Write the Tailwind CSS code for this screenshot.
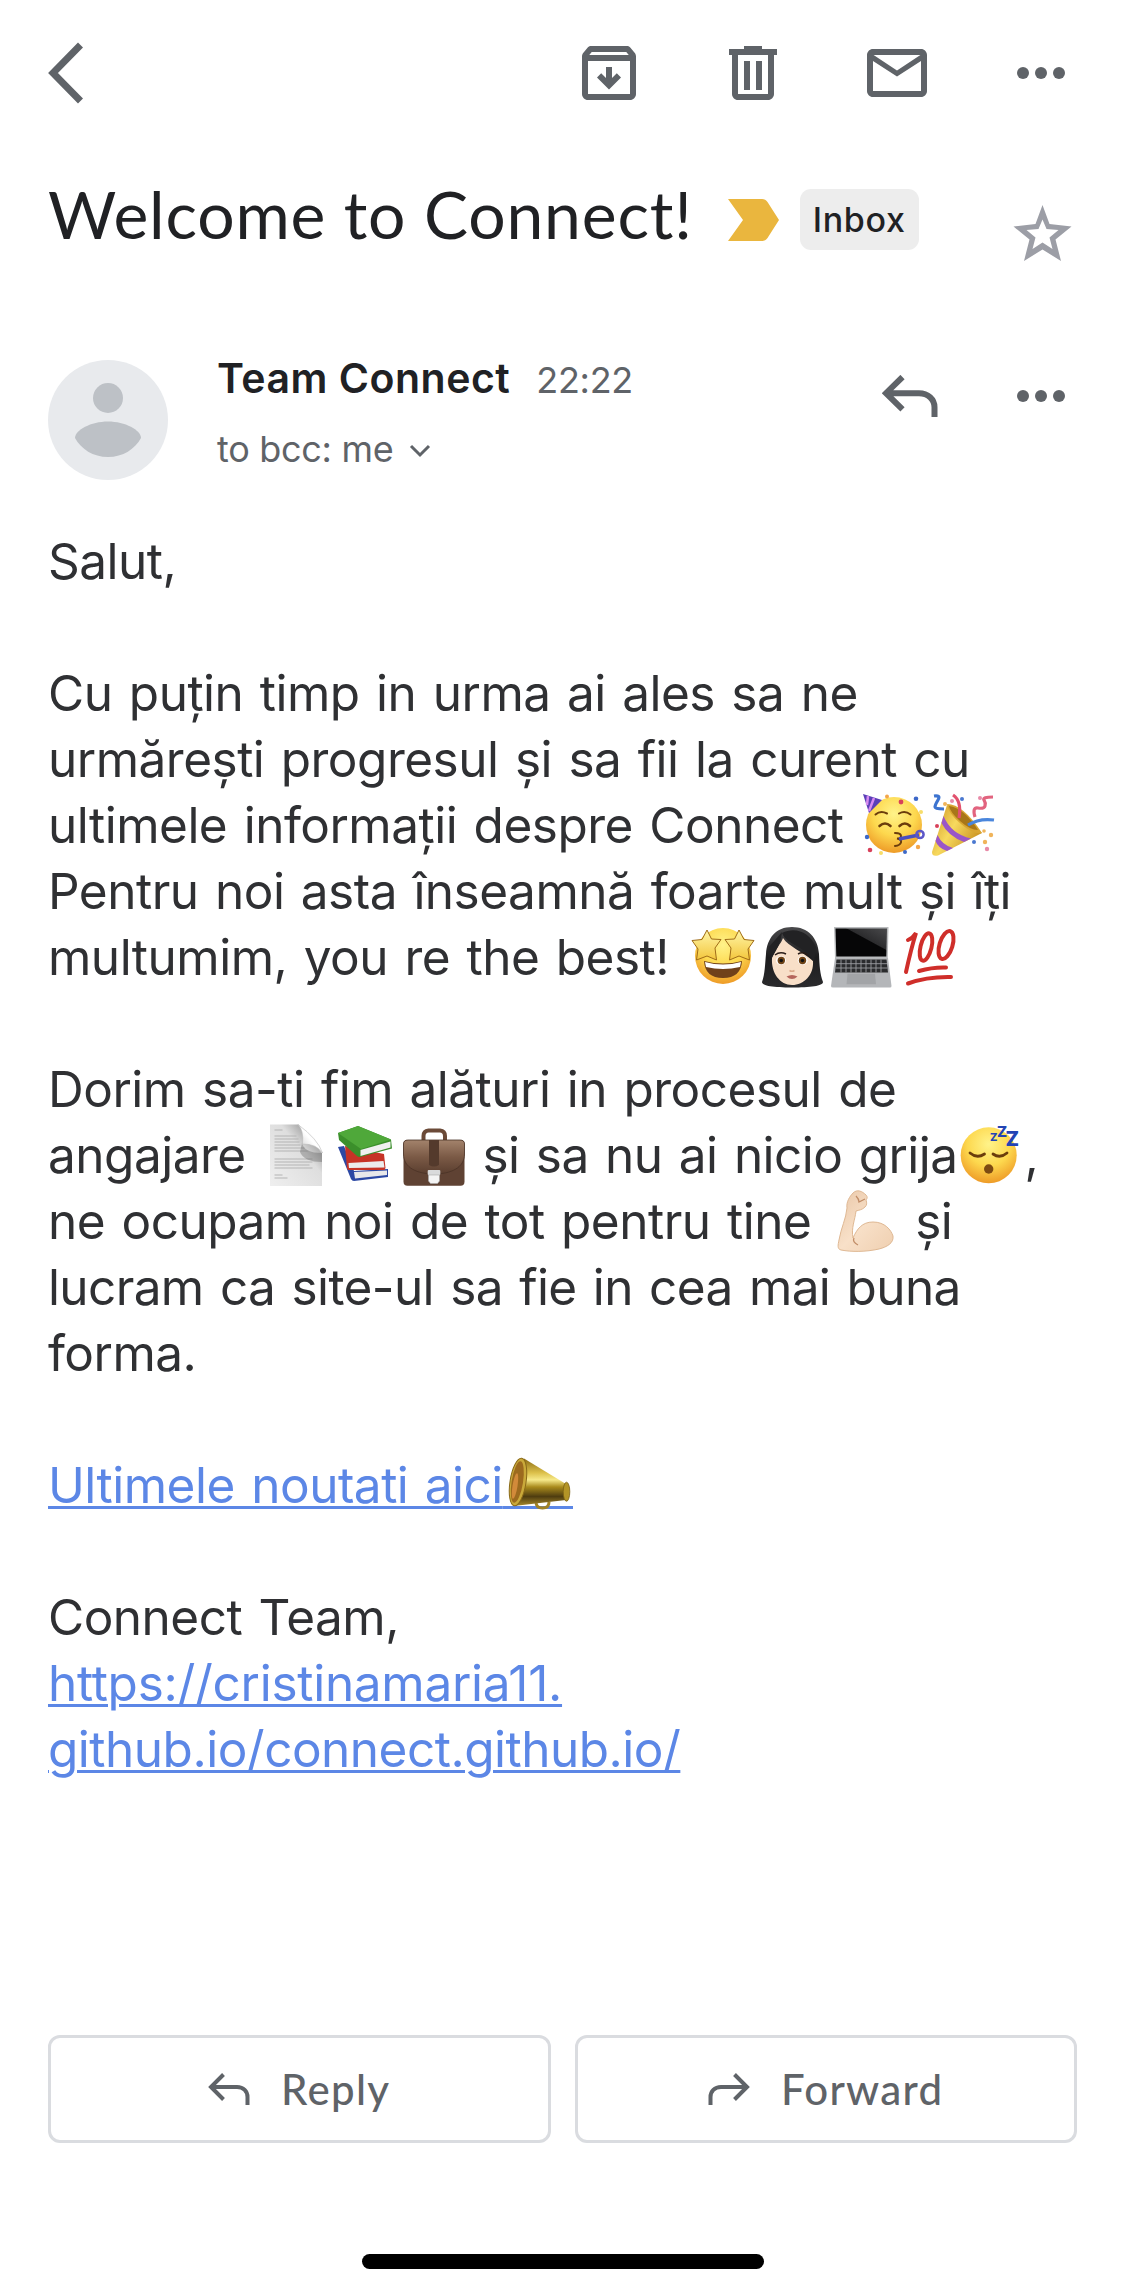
<!DOCTYPE html>
<html lang="ro">
<head>
<meta charset="utf-8">
<title>Welcome to Connect!</title>
<script src="https://cdn.jsdelivr.net/npm/@tailwindcss/browser@4"></script>
</head>
<body class="bg-white font-['Inter',sans-serif] text-[#202124]">
<svg class="absolute size-0" aria-hidden="true">
  <defs>
    <radialGradient id="face" cx="50%" cy="30%" r="70%"><stop offset="0" stop-color="#fff38a"/><stop offset=".55" stop-color="#fdd84e"/><stop offset="1" stop-color="#ee9b27"/></radialGradient>
    <linearGradient id="gold" x1="0" y1="0" x2="0" y2="1"><stop offset="0" stop-color="#8a6a14"/><stop offset=".3" stop-color="#dcc04a"/><stop offset=".45" stop-color="#f6e98a"/><stop offset=".6" stop-color="#a98a1c"/><stop offset=".8" stop-color="#4f3d10"/><stop offset="1" stop-color="#a88a2c"/></linearGradient>
    <linearGradient id="cone" x1="0" y1="0" x2="1" y2=".6"><stop offset="0" stop-color="#c98f1e"/><stop offset=".5" stop-color="#f7d95e"/><stop offset="1" stop-color="#c8901f"/></linearGradient>
    <linearGradient id="star" x1="0" y1="0" x2="0" y2="1"><stop offset="0" stop-color="#fff6a8"/><stop offset="1" stop-color="#f3c63c"/></linearGradient>
    <linearGradient id="hair" x1="0" y1="0" x2="0" y2="1"><stop offset="0" stop-color="#4a4a4c"/><stop offset=".5" stop-color="#1c1c1e"/><stop offset="1" stop-color="#2b2b2d"/></linearGradient>
    <linearGradient id="screen" x1="0" y1="1" x2="1" y2="0"><stop offset=".6" stop-color="#060607"/><stop offset=".62" stop-color="#2c2c2e"/><stop offset="1" stop-color="#4a4a4c"/></linearGradient>
    <linearGradient id="paper" x1="0" y1="1" x2="1" y2="0"><stop offset="0" stop-color="#efefef"/><stop offset=".6" stop-color="#dedede"/><stop offset="1" stop-color="#6d6d6d"/></linearGradient>
    <linearGradient id="curl" x1="0" y1="1" x2="1" y2="0"><stop offset="0" stop-color="#c4c4c4"/><stop offset=".5" stop-color="#ffffff"/><stop offset="1" stop-color="#e2e2e2"/></linearGradient>
    <linearGradient id="leather" x1="0" y1="0" x2="0" y2="1"><stop offset="0" stop-color="#a3836c"/><stop offset=".5" stop-color="#7b5a46"/><stop offset="1" stop-color="#5a3e2f"/></linearGradient>
    <linearGradient id="skin" x1="0" y1="0" x2="1" y2="1"><stop offset="0" stop-color="#e9c7a8"/><stop offset=".5" stop-color="#f8e0c8"/><stop offset="1" stop-color="#efcfb0"/></linearGradient>
  </defs>
</svg>

<header class="flex h-[146px] items-center justify-between pl-[48px] pr-[48px]">
  <svg class="h-[62px] w-[38px]" viewBox="0 0 38 62" fill="none" stroke="#5f6368" stroke-width="7"><path d="M32.500 3 5 31l27.500 28"/></svg>
  <div class="flex gap-[72px] fill-[#5f6368]">
    <svg class="size-[72px]" viewBox="0 0 24 24"><path d="m20.540 5.230-1.390-1.680C18.880 3.210 18.470 3 18 3H6c-.47 0-.88.21-1.160.55L3.460 5.230C3.170 5.570 3 6.020 3 6.500V19c0 1.100.9 2 2 2h14c1.100 0 2-.9 2-2V6.500c0-.48-.17-.93-.46-1.270zM6.240 5h11.520l.83 1H5.420l.82-1zM5 19V8h14v11H5zm11-5.500L12 17.500l-4-4 1.400-1.400 1.600 1.600V10h2v3.700l1.600-1.600 1.400 1.400z"/></svg>
    <svg class="size-[72px]" viewBox="0 0 24 24"><path d="M15 4V3H9v1H4v2h1v13c0 1.100.9 2 2 2h10c1.100 0 2-.9 2-2V6h1V4h-5zm2 15H7V6h10v13zM9 8h2v9.700H9V8zm4 0h2v9.700h-2V8z"/></svg>
    <svg class="size-[72px]" viewBox="0 0 24 24"><path d="M20 4H4c-1.100 0-2 .9-2 2v12c0 1.100.9 2 2 2h16c1.100 0 2-.9 2-2V6c0-1.100-.9-2-2-2zm-.2 2L12 11.200 4.200 6h15.600zM4 18V8l8 5.200L20 8v10H4z"/></svg>
    <svg class="size-[72px]" viewBox="0 0 24 24"><circle cx="6" cy="12" r="2"/><circle cx="12" cy="12" r="2"/><circle cx="18" cy="12" r="2"/></svg>
  </div>
</header>

<main class="px-[48px]">
  <div class="flex items-start pt-[28px]">
    <h1 class="whitespace-nowrap font-['Lato',sans-serif] text-[66px] leading-[80px] tracking-[0.8px]">Welcome to Connect!</h1>
    <svg class="ml-[35px] mt-[25px] h-[42px] w-[51px]" viewBox="0 0 51 42"><path d="M0 0h34q3.500 0 5.500 3L51 21 39.500 39q-2 3-5.500 3H0l15-21z" fill="#eab63e"/></svg>
    <span class="ml-[21px] mt-[15px] h-[61px] w-[119px] rounded-[11px] bg-[#ededed] text-center text-[34px] font-medium leading-[61px] tracking-[0.7px]">Inbox</span>
    <svg class="ml-auto mr-[5px] mt-[31px] h-[57px] w-[59px]" viewBox="0 0 59 57"><path d="M29.500 0 36.500 19 58.500 21.500 42.500 34.500 48 56 29.500 44.500 11 56 16.500 34.500.5 21.500 22.500 19zM29.500 14.500 33.500 24 45.500 25 36.500 32.500 39.500 44 29.500 37.500 19.500 44 22.500 32.500 13.500 25 25.500 24z" fill="#9c9ea6" fill-rule="evenodd"/></svg>
  </div>

  <div class="mt-[90px] flex h-[128px] items-start">
    <svg class="mt-[8px] size-[120px] shrink-0" viewBox="0 0 120 120"><circle cx="60" cy="60" r="60" fill="#e8eaed"/><circle cx="60" cy="38" r="15" fill="#bdc1c6"/><path d="M27 78c0-8 16-16.500 33-16.500S93 70 93 78c-6 11-18 19-33 19S33 89 27 78z" fill="#bdc1c6"/></svg>
    <div class="ml-[49px] mt-[1px]">
      <div class="flex items-baseline whitespace-nowrap leading-[50px]"><span class="text-[41px] font-semibold tracking-[0.500px]">Team Connect</span><span class="ml-[26px] text-[36px] tracking-[-0.300px] text-[#5f6368]">22:22</span></div>
      <div class="mt-[22px] flex items-center whitespace-nowrap text-[36px] leading-[44px] tracking-[-0.300px] text-[#5f6368]">to bcc: me<svg class="ml-[16px] mt-[3px] h-[14px] w-[22px]" viewBox="0 0 22 14" fill="none" stroke="#5f6368" stroke-width="3"><path d="m2 2 9 9 9-9"/></svg></div>
    </div>
    <svg class="ml-auto mt-[23px] h-[42px] w-[56px]" viewBox="0 0 56 42" fill="none" stroke="#5f6368" stroke-width="6"><path d="M20.500 2 4 18.200l16.500 16.200M4 18.200h33c9 0 15.500 6 15.500 14V42"/></svg>
    <svg class="ml-[67px] mt-[8px] h-[72px] w-[72px] fill-[#5f6368]" viewBox="0 0 24 24"><circle cx="6" cy="12" r="2"/><circle cx="12" cy="12" r="2"/><circle cx="18" cy="12" r="2"/></svg>
  </div>

  <article class="mt-[48px] space-y-[66px] text-[49.500px] leading-[66px] tracking-[-0.500px] text-[#2f3033] [word-spacing:3px] *:whitespace-pre">
    <div class="h-[66px]">Salut,</div>
    <div class="flex flex-col">
      <div class="h-[66px]">Cu puțin timp in urma ai ales sa ne</div>
      <div class="h-[66px]">urmărești progresul și sa fii la curent cu</div>
      <div class="flex h-[66px]"><span>ultimele informații despre Connect </span><svg role="img" aria-label="🥳" class="h-[66px] w-[69px]" viewBox="0 0 69 66"><circle cx="34" cy="33" r="28" fill="url(#face)"/><path d="M3 2 22 8 9 21z" fill="#5b3fb8"/><path d="m8 4-1 9m7-7-5 13" stroke="#d78af0" stroke-width="2.500"/><g fill="none" stroke="#6b3d0c" stroke-width="2" stroke-linecap="round"><path d="M15.500 22.500q5-4.500 11.500-1M39 21.500q6-3.500 11.500 1"/><path d="M19.500 34q5.500-5 11 0M39.500 34q5.500-5 10.500 0" stroke-width="2.600"/><path d="M35 41q6 0 6 3t-4 2.500q5 1 4 4t-6 3.500"/></g><path d="m39 47 20-4" stroke="#4a4fc0" stroke-width="3.500"/><circle cx="60" cy="42.500" r="3.600" fill="none" stroke="#5c56c8" stroke-width="2.500"/><g fill="#3d68c8"><circle cx="56" cy="6.700" r="2.300"/><circle cx="7" cy="45" r="2.200"/><circle cx="45" cy="60" r="2"/></g><g fill="#d8415a"><circle cx="41" cy="10" r="2.400"/><circle cx="10" cy="58" r="2.300"/></g><g fill="#f3a64a"><circle cx="27" cy="4.500" r="2"/><circle cx="58" cy="55" r="2.200"/></g><g fill="#f7dd6a"><circle cx="61" cy="20" r="2"/><circle cx="21" cy="61" r="2"/></g></svg><svg role="img" aria-label="🎉" class="h-[66px] w-[69px]" viewBox="0 0 69 66"><path d="M3 60 18 13 53 41 9 63.500Q3 65 3 60z" fill="url(#cone)"/><path d="M14.500 24Q22 42 42 46.500L35 50Q19 44 12.500 31zM8.500 43Q13 53 24 56l-6 3Q9 56 6.500 49z" fill="#9a55c8"/><path d="M18 12Q34 12 53 41q-8 2-21-9T18 12z" fill="#d9a632"/><path d="M20 14Q35 16 49 38q-8 0-18-9T20 14z" fill="#a87618"/><g fill="none" stroke-width="3.200"><path d="M5 4q7-1 4 4t-3 7 9 2" stroke="#3d74d0"/><path d="M24 3q9 6 6 23" stroke="#e2526e"/><path d="M39 33q11-7 26-5" stroke="#4a86dc"/><path d="M46 25q-3-10 3-9t7-2-1-6 9-3" stroke="#e2647f"/></g><g fill="#4a78d0"><circle cx="33" cy="7" r="2"/><circle cx="45" cy="50" r="2"/></g><g fill="#e88aa8"><circle cx="51" cy="6" r="2"/><circle cx="58" cy="57" r="2.200"/><circle cx="23" cy="9" r="2"/></g><g fill="#f0b45a"><circle cx="62" cy="43" r="2.200"/><circle cx="56" cy="50" r="2.200"/><circle cx="16" cy="12" r="2"/><circle cx="55" cy="39" r="1.800"/></g><circle cx="8" cy="34" r="2" fill="#d8415a"/></svg></div>
      <div class="h-[66px]">Pentru noi asta înseamnă foarte mult și îți</div>
      <div class="flex h-[66px]"><span>multumim, you re the best! </span><svg role="img" aria-label="🤩" class="ml-[4px] h-[66px] w-[69px]" viewBox="0 0 69 66"><circle cx="34" cy="32" r="28" fill="url(#face)"/><path d="M15 37q19 5 38 0-1 17-19 17T15 37z" fill="#70411a"/><path d="M16 38q18 5 36 0l-1 5q-17 4-34 0z" fill="#fff"/><path d="m18 6 4.500 9 9.500.5-6 8.500 1.500 12-9.500-4-10.500 4L9 25l-6-8.500 10-1z" fill="url(#star)" stroke="#a06c18" stroke-width="1" stroke-linejoin="round"/><path d="m50 6 5 9.500 10 1-6 8.500 1.500 11L50 32l-9.500 4L42 24l-6-8.500 9.500-.5z" fill="url(#star)" stroke="#a06c18" stroke-linejoin="round"/></svg><svg role="img" aria-label="👩🏻" class="h-[66px] w-[69px]" viewBox="0 0 69 66"><path d="M34 3C50 3 60 14 61 30c.5 12 1 20 4 28 0 4-13 5.500-31 5.500S4 62 4 58c3-8 3-18 4-28C9 14 18 3 34 3z" fill="url(#hair)"/><path d="M14 34c3-9 9-14 11-20 6 9 19 13 30 23 1 14-9 24-21 24S13 49 14 34z" fill="#f8dfc8"/><path d="M24 8c-1 8-3 15-11 27l-2-12zM24 9c5 13 24 12 32 30l2-16C52 9 38 2 24 9z" fill="#222224"/><g fill="#fff"><ellipse cx="23" cy="36.500" rx="5" ry="4.200"/><ellipse cx="44.700" cy="36.500" rx="5" ry="4.200"/></g><g fill="#6e4215"><circle cx="23.300" cy="36.500" r="3.700"/><circle cx="44.500" cy="36.500" r="3.700"/></g><g fill="#111"><circle cx="23.300" cy="36.500" r="1.700"/><circle cx="44.500" cy="36.500" r="1.700"/></g><g fill="none" stroke="#2a1d18" stroke-width="1.500"><path d="M17 31q5-4 11-1M40 30q5-3 10 1"/><path d="M31.500 46.500q2.500 1.500 5 0" stroke="#d9a98a"/></g><path d="M28.500 52.500q5.500-3 11 0-5.500 5-11 0z" fill="#b5655c"/></svg><svg role="img" aria-label="💻" class="h-[66px] w-[69px]" viewBox="0 0 69 66"><path d="M7 3h54.500l-.7 31H8z" fill="#b9bbbd"/><path d="M8.500 4.500h51.500l-.7 28H9.300z" fill="url(#screen)"/><path d="M8 34h53l3.500 28q0 1.500-1.500 1.500H6Q4 63.500 4 62z" fill="#b4b6b9"/><path d="M9.500 35.500h50l1.500 13H8z" fill="#2a2b2d"/><path d="M9 39.700h51M8.500 44h52M14 35.500v13M19 35.500v13M24 35.500v13M29 35.500v13M34 35.500v13M39 35.500v13M44 35.500v13M49 35.500v13M54 35.500v13" stroke="#9a9c9f" stroke-width=".9"/><path d="M20.500 49.800h27.500l1 10.500H19.500z" fill="#a2a4a7"/></svg><svg role="img" aria-label="💯" class="h-[66px] w-[69px]" viewBox="0 0 69 66" fill="none" stroke="#cf2e2a" stroke-width="4" stroke-linecap="round"><path d="M12 16q5-2 8-7-5 16-10 39"/><ellipse cx="30" cy="23" rx="5.500" ry="14" transform="rotate(14 30 23)"/><ellipse cx="50" cy="21" rx="6.500" ry="14.500" transform="rotate(17 50 21)"/><path d="M23 47q14-4 27-3.500M12 59.500q19-7 43-6.500"/></svg></div>
    </div>
    <div class="flex flex-col">
      <div class="h-[66px]">Dorim sa-ti fim alături in procesul de</div>
      <div class="flex h-[66px]"><span>angajare </span><svg role="img" aria-label="📄" class="h-[66px] w-[69px]" viewBox="0 0 69 66"><path d="M8 2.500h28.500L60 31v33H8z" fill="url(#paper)"/><path d="M12.500 8h8M12.500 14h22M12.500 17h24M12.500 20h25M12.500 23h26M12.500 26h30M12.500 29h34M12.500 37h38M12.500 40h38M12.500 43h35M12.500 46h38M12.500 53h8M12.500 56h13" stroke="#b3b3b3" stroke-width="1.200"/><path d="M40 21q2 10 20 10v9Q42 40 38 30z" fill="#555" opacity=".35"/><path d="M36 2.500q6 6 4.500 19.500Q55 22 60.500 31 56 17 36 2.500z" fill="url(#curl)" stroke="#bbb" stroke-width=".6"/></svg><svg role="img" aria-label="📚" class="h-[66px] w-[69px]" viewBox="0 0 69 66"><path d="m7 25 6-1 10 25 34-2v8l-34 4q-2 0-3-2z" fill="#2c48a4"/><path d="m23 50 33-1.500v4.500l-32 3.500z" fill="#e8e8ea"/><path d="m14 24 39 8 1.500 14-1 2H18q-2 0-2-2z" fill="#c63326"/><path d="m17.500 41 35-2 1 6.500-35.500.5z" fill="#ececec"/><path d="M7 11 27 4l33 13.500 1 9-32 8.500q-2 0-3-1L8 18z" fill="#3b8f2b"/><path d="M7 11 27 4l33 13.500L30 27z" fill="#4fa83a"/><path d="m29.500 28 30-8.500v6L29.500 34z" fill="#f0f0f0"/></svg><svg role="img" aria-label="💼" class="h-[66px] w-[69px]" viewBox="0 0 69 66"><path d="M23.500 18v-4q0-5 5-5.500h11.500q5 .5 5 5.500v4" fill="none" stroke="#6b4a38" stroke-width="4"/><rect x="3.500" y="18" width="61" height="45.700" rx="4" fill="#5f4233"/><path d="M8 18h52q4.500 0 4.500 4v10c0 14-14 20-30.500 20S3.500 46 3.500 32V22q0-4 4.500-4z" fill="url(#leather)" stroke="#4a3226" stroke-width=".8"/><path d="M29 18h10v25q-5 3-10 0z" fill="#543a2c"/><rect x="27.700" y="48" width="12.600" height="5" rx="1" fill="#d9dadb"/><path d="M28.500 53h11v6l-2 2.500h-7l-2-2.500z" fill="#f4f4f4" stroke="#aaa" stroke-width=".6"/></svg><span class="-ml-[3px] tracking-[-0.550px]"> și sa nu ai nicio grija</span><svg role="img" aria-label="😴" class="-ml-[2px] h-[66px] w-[69px]" viewBox="0 0 69 66"><circle cx="33.700" cy="33.300" r="28" fill="url(#face)"/><path d="M15 31q7 6 14.500 1M38 32q7 5 14 -1" fill="none" stroke="#6b3d0c" stroke-width="2.800" stroke-linecap="round"/><ellipse cx="33.700" cy="47" rx="4.700" ry="4.700" fill="#7d4a12"/><g fill="#2344b4" font-family="Inter, sans-serif" font-weight="800" letter-spacing="0"><text x="35" y="18.500" font-size="11">Z</text><text x="42" y="15" font-size="15">Z</text><text x="50.500" y="23.500" font-size="20">Z</text></g></svg><span>,</span></div>
      <div class="flex h-[66px]"><span>ne ocupam noi de tot pentru tine </span><svg role="img" aria-label="💪🏻" class="ml-[4px] h-[66px] w-[69px]" viewBox="0 0 69 66"><path d="M15 20c-1-6 3-12 6-15 4-4 9-2 13 2 2 2 1 4 0 5 1 3 1 5-1 7-3 3-6 3-9 4-1 9-5 17-3 27 4-9 9-16 20-16 12 0 18 8 20 14 1 7-6 11-14 13-13 3-28 3-38 1-4-1-3-5-2-10 2-12 7-21 8-32z" fill="url(#skin)" stroke="#dfb893" stroke-width="1"/><path d="M24 8q3 3 3 6l6-3M22 50q-2 4 4 7" fill="none" stroke="#c08c66" stroke-width="1.300"/></svg><span class="-ml-[2px]"> și</span></div>
      <div class="h-[66px] tracking-[-0.620px]">lucram ca site-ul sa fie in cea mai buna</div>
      <div class="h-[66px]">forma.</div>
    </div>
    <a class="flex h-[66px] text-[#5c87e6]"><span class="underline decoration-[3px] underline-offset-[3px]">Ultimele noutati aici</span><svg role="img" aria-label="📣" class="h-[66px] w-[70px]" viewBox="-1 0 70 66"><path d="M-1 54h70v3H-1z" fill="#5c87e6"/><path d="M32 50q0 6 6.500 6t6.500-6" fill="none" stroke="#a08225" stroke-width="3"/><path d="M20 6.500 62 32v16L10 54z" fill="url(#gold)"/><ellipse cx="62.500" cy="39.700" rx="3.300" ry="9.500" fill="#b39426" stroke="#7a5f14" stroke-width=".8"/><ellipse cx="14" cy="30" rx="8" ry="24" transform="rotate(9 14 30)" fill="#c9a93a" stroke="#8a6a18"/><ellipse cx="13.300" cy="30" rx="5.700" ry="21" transform="rotate(9 13.300 30)" fill="#9c6a1e"/><ellipse cx="11" cy="34" rx="2.500" ry="13" transform="rotate(9 11 34)" fill="#d28a3a"/></svg></a>
    <div class="flex flex-col">
      <div class="h-[66px]">Connect Team,</div>
      <a class="text-[#5c87e6] underline decoration-[3px] underline-offset-[3px]"><span class="tracking-[-0.280px]">https://cristinamaria11.</span><br>github.io/connect.github.io/</a>
    </div>
  </article>

  <div class="mt-[253px] grid grid-cols-2 gap-[24px] font-['Lato',sans-serif] text-[42px] font-medium tracking-[1.300px] text-[#5f6368]">
    <button class="flex h-[108px] items-center justify-center gap-[31px] rounded-[12px] border-[3px] border-[#dadce0]"><svg class="h-[32px] w-[42px]" viewBox="0 0 42 32" fill="none" stroke="#5f6368" stroke-width="4"><path d="M15.500 1.500 3 14l12.500 12.500M3 14h26c6.500 0 10.500 4.500 10.500 10v8"/></svg>Reply</button>
    <button class="flex h-[108px] items-center justify-center gap-[31px] rounded-[12px] border-[3px] border-[#dadce0]"><svg class="h-[32px] w-[42px]" viewBox="0 0 42 32" fill="none" stroke="#5f6368" stroke-width="4"><path d="M26.500 1.500 39 14 26.500 26.500M39 14H13C6.500 14 2.500 18.500 2.500 24v8"/></svg>Forward</button>
  </div>
</main>
<div class="mx-auto mt-[111px] h-[15px] w-[402px] rounded-full bg-black"></div>
</body>
</html>
